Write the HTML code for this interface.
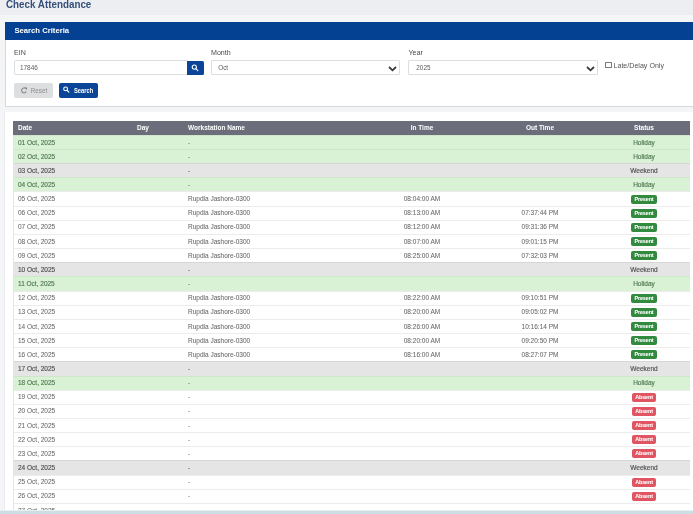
<!DOCTYPE html>
<html><head><meta charset="utf-8">
<style>
*{box-sizing:border-box;margin:0;padding:0}
html,body{width:693px;height:514px;overflow:hidden}
body{background:#eceef1;font-family:"Liberation Sans",sans-serif;position:relative;color:#555}
.abs{position:absolute;white-space:nowrap}
#title{left:6px;top:-1.2px;font-size:10.4px;font-weight:bold;color:#35507a;line-height:11px;transform:scaleX(0.945);transform-origin:0 0}
#wrap{position:absolute;left:0;top:15px;width:693px;height:499px;background:#f4f5f7}
#card1{position:absolute;left:5px;top:22px;width:700px;height:84.5px;background:#fff;border-left:1px solid #d6d8db;border-bottom:1px solid #d6d8db}
#card1 .hd{position:absolute;left:-1px;top:0;right:0;height:17.6px;background:#054193}
#card1 .hd span{position:absolute;left:9.4px;top:4.3px;font-size:7.7px;font-weight:bold;color:#fff;line-height:10px}
.lbl{font-size:7.1px;color:#4a4a4a;line-height:8px}
.inp{position:absolute;background:#fff;border:1px solid #dcdee1;border-radius:1px}
.inp span{position:absolute;font-size:6.4px;color:#5c5c5c;line-height:8px;top:3.4px!important}
.btn-ic{position:absolute;background:#0a4597;border-radius:0 1.5px 1.5px 0}
#card2{position:absolute;left:4px;top:112px;width:700px;height:420px;background:#fff;border-left:1px solid #e9ebee}
table{position:absolute;left:13px;top:120.7px;width:677px;border-collapse:collapse;table-layout:fixed;font-size:6.5px}
th{background:#6b6e7a;color:#fff;font-weight:bold;height:14.16px;padding:1px 0 0 5px;text-align:left;line-height:8px}
td{-webkit-text-stroke:0.06px currentColor;height:14.16px;padding:1.2px 0 0 5px;line-height:8px;box-shadow:inset 0 1px #ececec;color:#6a6a6a;white-space:nowrap}
td:first-child{box-shadow:inset 1px 0 #e2e4e7,inset 0 1px #ececec}
tr.h td:first-child{box-shadow:inset 1px 0 #e2e4e7,inset 0 1px #cfe6cb}
tr.w td:first-child{box-shadow:inset 1px 0 #e2e4e7,inset 0 1px #d6d6d6}
td.c,th.c{text-align:center;padding-left:0}
tr.h td{-webkit-text-stroke:0.15px currentColor;background:#d9f1d5;color:#517a51;box-shadow:inset 0 1px #cfe6cb}
tr.w td{-webkit-text-stroke:0.15px currentColor;background:#e5e5e5;color:#4f4f4f;box-shadow:inset 0 1px #d6d6d6}
.b{display:inline-block;border-radius:2px;color:#fff;font-weight:bold;font-size:5.4px;line-height:9px;height:9px;padding:0 3.2px;text-align:center;vertical-align:middle;letter-spacing:-0.1px}
.p{background:#328a3f}
.a{background:#e05561}
#bottombar{position:absolute;left:0;top:511px;width:693px;height:3px;background:#cddde3;box-shadow:0 -1px #e6eff2}
</style></head>
<body>
<div id="root" style="position:absolute;left:0;top:0;width:693px;height:514px;will-change:transform;opacity:0.999">
<div id="wrap"></div>
<div class="abs" id="title">Check Attendance</div>
<div id="card1">
  <div class="hd"><span>Search Criteria</span></div>
</div>
<div class="abs lbl" style="left:14px;top:49px">EIN</div>
<div class="inp" style="left:14px;top:60px;width:174px;height:14.6px;border-radius:2px 0 0 2px"><span style="left:5px;top:3px">17846</span></div>
<div class="btn-ic" style="left:187px;top:60.5px;width:17px;height:14.8px">
  <svg width="17" height="15" viewBox="0 0 17 15" style="position:absolute;left:0;top:0"><circle cx="7.3" cy="6.1" r="2.1" fill="none" stroke="#fff" stroke-width="1.05"/><line x1="8.9" y1="7.7" x2="10.8" y2="9.6" stroke="#fff" stroke-width="1.1" stroke-linecap="round"/></svg>
</div>
<div class="abs lbl" style="left:211px;top:49px">Month</div>
<div class="inp" style="left:211.2px;top:60px;width:189.3px;height:14.6px"><span style="left:6px;top:3px">Oct</span>
 <svg width="9" height="6" viewBox="0 0 9 6" style="position:absolute;left:175.8px;top:4.6px"><polyline points="1,1 4.5,4.3 8,1" fill="none" stroke="#3a3a3a" stroke-width="1.8"/></svg></div>
<div class="abs lbl" style="left:408.5px;top:49px">Year</div>
<div class="inp" style="left:408.3px;top:60px;width:190px;height:14.6px"><span style="left:7px;top:3px">2025</span>
 <svg width="9" height="6" viewBox="0 0 9 6" style="position:absolute;left:176.5px;top:4.6px"><polyline points="1,1 4.5,4.3 8,1" fill="none" stroke="#3a3a3a" stroke-width="1.8"/></svg></div>
<div class="abs" style="left:605px;top:61.5px;width:6.6px;height:6px;border:0.7px solid #7a7a7a;border-radius:0.5px;background:#fff"></div>
<div class="abs lbl" style="left:613.5px;top:61.7px;color:#555">Late/Delay Only</div>
<div class="abs" style="left:14.2px;top:82.8px;width:38.8px;height:14.9px;background:#dddedf;border-radius:2px"></div>
<svg class="abs" width="9" height="9" viewBox="0 0 9 9" style="left:20px;top:86px"><path d="M5.6,2.4 A2.5,2.5 0 1 0 6.3,5.6" fill="none" stroke="#8a8a8a" stroke-width="1.1"/><path d="M4.6,1.6 L7.0,1.6 L7.0,4.0 Z" fill="#7a7a7a"/></svg>
<div class="abs" style="left:30.8px;top:86.5px;font-size:6.3px;color:#8e8e8e;line-height:8px">Reset</div>
<div class="abs" style="left:58.5px;top:82.8px;width:39.2px;height:14.9px;background:#0a4597;border-radius:2px"></div>
<svg class="abs" width="10" height="10" viewBox="0 0 10 10" style="left:62.4px;top:85.1px"><circle cx="3.6" cy="3.9" r="1.9" fill="none" stroke="#fff" stroke-width="1.1"/><line x1="5" y1="5.3" x2="6.9" y2="7.1" stroke="#fff" stroke-width="1.2" stroke-linecap="round"/></svg>
<div class="abs" style="left:73.8px;top:86.9px;font-size:6.3px;color:#fff;font-weight:bold;line-height:8px;transform:scaleX(0.92);transform-origin:0 0">Search</div>
<div id="card2"></div>
<table>
<colgroup><col style="width:119px"><col style="width:51px"><col style="width:179px"><col style="width:120px"><col style="width:116px"><col style="width:92px"></colgroup>
<thead><tr><th>Date</th><th>Day</th><th>Workstation Name</th><th class="c">In Time</th><th class="c">Out Time</th><th class="c">Status</th></tr></thead>
<tbody>
<tr class="h"><td>01 Oct, 2025</td><td></td><td>-</td><td class="c"></td><td class="c"></td><td class="c">Holiday</td></tr>
<tr class="h"><td>02 Oct, 2025</td><td></td><td>-</td><td class="c"></td><td class="c"></td><td class="c">Holiday</td></tr>
<tr class="w"><td>03 Oct, 2025</td><td></td><td>-</td><td class="c"></td><td class="c"></td><td class="c">Weekend</td></tr>
<tr class="h"><td>04 Oct, 2025</td><td></td><td>-</td><td class="c"></td><td class="c"></td><td class="c">Holiday</td></tr>
<tr><td>05 Oct, 2025</td><td></td><td>Rupdia Jashore-0300</td><td class="c">08:04:00 AM</td><td class="c"></td><td class="c"><span class="b p">Present</span></td></tr>
<tr><td>06 Oct, 2025</td><td></td><td>Rupdia Jashore-0300</td><td class="c">08:13:00 AM</td><td class="c">07:37:44 PM</td><td class="c"><span class="b p">Present</span></td></tr>
<tr><td>07 Oct, 2025</td><td></td><td>Rupdia Jashore-0300</td><td class="c">08:12:00 AM</td><td class="c">09:31:36 PM</td><td class="c"><span class="b p">Present</span></td></tr>
<tr><td>08 Oct, 2025</td><td></td><td>Rupdia Jashore-0300</td><td class="c">08:07:00 AM</td><td class="c">09:01:15 PM</td><td class="c"><span class="b p">Present</span></td></tr>
<tr><td>09 Oct, 2025</td><td></td><td>Rupdia Jashore-0300</td><td class="c">08:25:00 AM</td><td class="c">07:32:03 PM</td><td class="c"><span class="b p">Present</span></td></tr>
<tr class="w"><td>10 Oct, 2025</td><td></td><td>-</td><td class="c"></td><td class="c"></td><td class="c">Weekend</td></tr>
<tr class="h"><td>11 Oct, 2025</td><td></td><td>-</td><td class="c"></td><td class="c"></td><td class="c">Holiday</td></tr>
<tr><td>12 Oct, 2025</td><td></td><td>Rupdia Jashore-0300</td><td class="c">08:22:00 AM</td><td class="c">09:10:51 PM</td><td class="c"><span class="b p">Present</span></td></tr>
<tr><td>13 Oct, 2025</td><td></td><td>Rupdia Jashore-0300</td><td class="c">08:20:00 AM</td><td class="c">09:05:02 PM</td><td class="c"><span class="b p">Present</span></td></tr>
<tr><td>14 Oct, 2025</td><td></td><td>Rupdia Jashore-0300</td><td class="c">08:26:00 AM</td><td class="c">10:16:14 PM</td><td class="c"><span class="b p">Present</span></td></tr>
<tr><td>15 Oct, 2025</td><td></td><td>Rupdia Jashore-0300</td><td class="c">08:20:00 AM</td><td class="c">09:20:50 PM</td><td class="c"><span class="b p">Present</span></td></tr>
<tr><td>16 Oct, 2025</td><td></td><td>Rupdia Jashore-0300</td><td class="c">08:16:00 AM</td><td class="c">08:27:07 PM</td><td class="c"><span class="b p">Present</span></td></tr>
<tr class="w"><td>17 Oct, 2025</td><td></td><td>-</td><td class="c"></td><td class="c"></td><td class="c">Weekend</td></tr>
<tr class="h"><td>18 Oct, 2025</td><td></td><td>-</td><td class="c"></td><td class="c"></td><td class="c">Holiday</td></tr>
<tr><td>19 Oct, 2025</td><td></td><td>-</td><td class="c"></td><td class="c"></td><td class="c"><span class="b a">Absent</span></td></tr>
<tr><td>20 Oct, 2025</td><td></td><td>-</td><td class="c"></td><td class="c"></td><td class="c"><span class="b a">Absent</span></td></tr>
<tr><td>21 Oct, 2025</td><td></td><td>-</td><td class="c"></td><td class="c"></td><td class="c"><span class="b a">Absent</span></td></tr>
<tr><td>22 Oct, 2025</td><td></td><td>-</td><td class="c"></td><td class="c"></td><td class="c"><span class="b a">Absent</span></td></tr>
<tr><td>23 Oct, 2025</td><td></td><td>-</td><td class="c"></td><td class="c"></td><td class="c"><span class="b a">Absent</span></td></tr>
<tr class="w"><td>24 Oct, 2025</td><td></td><td>-</td><td class="c"></td><td class="c"></td><td class="c">Weekend</td></tr>
<tr><td>25 Oct, 2025</td><td></td><td>-</td><td class="c"></td><td class="c"></td><td class="c"><span class="b a">Absent</span></td></tr>
<tr><td>26 Oct, 2025</td><td></td><td>-</td><td class="c"></td><td class="c"></td><td class="c"><span class="b a">Absent</span></td></tr>
<tr><td>27 Oct, 2025</td><td></td><td>-</td><td class="c"></td><td class="c"></td><td class="c"></td></tr>
</tbody></table>
<div id="bottombar"></div>
</div>
</body></html>
